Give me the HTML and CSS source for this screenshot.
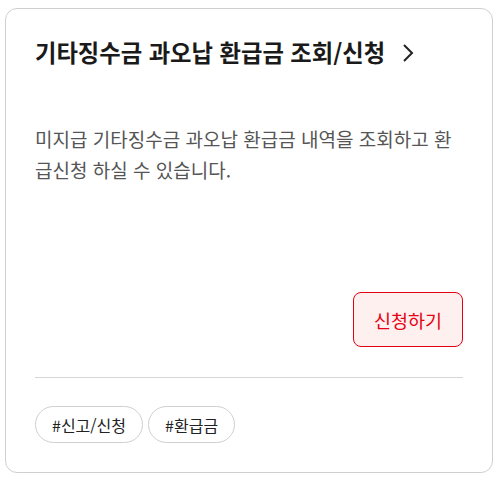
FILE: index.html
```html
<!DOCTYPE html>
<html lang="ko">
<head>
<meta charset="utf-8">
<link rel="stylesheet" href="styles.css">
</head>
<body>
<div class="card">
  <a class="title-row" href="#">
    <h2 class="title">기타징수금 과오납 환급금 조회/신청</h2>
    <svg class="chev" width="12" height="20" viewBox="0 0 12 20"><path d="M2 2 L10 10 L2 18" fill="none" stroke="#222" stroke-width="2"/></svg>
  </a>
  <p class="desc">미지급 기타징수금 과오납 환급금 내역을 조회하고 환급신청 하실 수 있습니다.</p>
  <div class="actions">
    <button class="apply">신청하기</button>
  </div>
  <div class="tags">
    <span class="tag">#신고/신청</span>
    <span class="tag">#환급금</span>
  </div>
</div>
</body>
</html>
```
FILE: styles.css
```css
* { box-sizing: border-box; }
html, body { margin: 0; padding: 0; background: #fff; }
body {
  padding: 8px 7px 7px 5px;
  font-family: "Noto Sans CJK KR", "Noto Sans", sans-serif;
  color: #222;
}
.card {
  height: 465px;
  border: 1px solid #cfcfcf;
  border-radius: 12px;
  padding: 26px 29px 0 29px;
  display: flex;
  flex-direction: column;
}
.title-row {
  display: flex;
  align-items: center;
  gap: 17px;
  text-decoration: none;
  color: #1a1a1a;
}
.title {
  margin: 0;
  font-size: 23.3px;
  font-weight: 700;
  line-height: 34px;
}
.chev { display: block; margin-top: 1px; }
.desc {
  margin: 54px 0 0 0;
  font-size: 19px;
  line-height: 31px;
  color: #555;
}
.actions {
  display: flex;
  justify-content: flex-end;
  margin-top: 107px;
}
.apply {
  width: 110px;
  height: 55px;
  border: 1px solid #e60012;
  border-radius: 8px;
  background: #fff0f0;
  color: #e60012;
  font-family: inherit;
  font-size: 18.5px;
}
.tags {
  margin-top: 30px;
  border-top: 1px solid #d5d5d5;
  padding-top: 28px;
  display: flex;
  gap: 5px;
}
.tag {
  height: 37px;
  padding: 0 16px;
  border: 1px solid #cfcfcf;
  border-radius: 19px;
  display: flex;
  align-items: center;
  font-size: 16px;
  color: #222;
}
```
